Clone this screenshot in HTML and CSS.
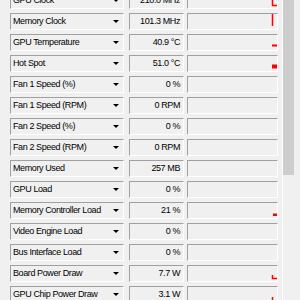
FILE: index.html
```html
<!DOCTYPE html>
<html lang="en">
<head>
    <meta charset="UTF-8">
    <title>Sensors</title>
    <link rel="stylesheet" href="styles.css">
</head>
<body>
    <div class="window">
        <div class="sensors">
            <div class="row">
                <div class="box label">GPU Clock<span class="arrow"></span></div>
                <div class="box value">210.0 MHz</div>
                <div class="box graph"><svg viewBox="0 0 89 15"><path d="M84.5 3V12.5H89"/></svg></div>
            </div>
            <div class="row">
                <div class="box label">Memory Clock<span class="arrow"></span></div>
                <div class="box value">101.3 MHz</div>
                <div class="box graph"><svg viewBox="0 0 89 15"><path d="M84.5 0V12"/></svg></div>
            </div>
            <div class="row">
                <div class="box label">GPU Temperature<span class="arrow"></span></div>
                <div class="box value">40.9 °C</div>
                <div class="box graph"><svg viewBox="0 0 89 15"><rect x="84" y="9.5" width="5" height="2"/></svg></div>
            </div>
            <div class="row">
                <div class="box label">Hot Spot<span class="arrow"></span></div>
                <div class="box value">51.0 °C</div>
                <div class="box graph"><svg viewBox="0 0 89 15"><rect x="84" y="8.5" width="5" height="4"/></svg></div>
            </div>
            <div class="row">
                <div class="box label">Fan 1 Speed (%)<span class="arrow"></span></div>
                <div class="box value">0 %</div>
                <div class="box graph"></div>
            </div>
            <div class="row">
                <div class="box label">Fan 1 Speed (RPM)<span class="arrow"></span></div>
                <div class="box value">0 RPM</div>
                <div class="box graph"></div>
            </div>
            <div class="row">
                <div class="box label">Fan 2 Speed (%)<span class="arrow"></span></div>
                <div class="box value">0 %</div>
                <div class="box graph"></div>
            </div>
            <div class="row">
                <div class="box label">Fan 2 Speed (RPM)<span class="arrow"></span></div>
                <div class="box value">0 RPM</div>
                <div class="box graph"></div>
            </div>
            <div class="row">
                <div class="box label">Memory Used<span class="arrow"></span></div>
                <div class="box value">257 MB</div>
                <div class="box graph"></div>
            </div>
            <div class="row">
                <div class="box label">GPU Load<span class="arrow"></span></div>
                <div class="box value">0 %</div>
                <div class="box graph"></div>
            </div>
            <div class="row">
                <div class="box label">Memory Controller Load<span class="arrow"></span></div>
                <div class="box value">21 %</div>
                <div class="box graph"><svg viewBox="0 0 89 15"><rect x="85" y="10.5" width="4" height="2.5"/></svg></div>
            </div>
            <div class="row">
                <div class="box label">Video Engine Load<span class="arrow"></span></div>
                <div class="box value">0 %</div>
                <div class="box graph"></div>
            </div>
            <div class="row">
                <div class="box label">Bus Interface Load<span class="arrow"></span></div>
                <div class="box value">0 %</div>
                <div class="box graph"></div>
            </div>
            <div class="row">
                <div class="box label">Board Power Draw<span class="arrow"></span></div>
                <div class="box value">7.7 W</div>
                <div class="box graph"><svg viewBox="0 0 89 15"><path d="M84.5 9V12.5H89"/></svg></div>
            </div>
            <div class="row">
                <div class="box label">GPU Chip Power Draw<span class="arrow"></span></div>
                <div class="box value">3.1 W</div>
                <div class="box graph"><svg viewBox="0 0 89 15"><path d="M84.5 10V15"/></svg></div>
            </div>
        </div>
        <div class="scrollbar">
            <div class="thumb"></div>
        </div>
    </div>
</body>
</html>
```

FILE: styles.css
```css
* {
    box-sizing: border-box;
    margin: 0;
    padding: 0;
}

body {
    background: #f0f0f0;
    font-family: "Liberation Sans", Arial, sans-serif;
    font-size: 9px;
    letter-spacing: -0.4px;
    color: #000;
    overflow: hidden;
}

.window {
    display: flex;
    gap: 4px;
    height: 300px;
    padding-left: 10px;
}

.sensors {
    width: 268px;
    margin-top: -8px;
    display: flex;
    flex-direction: column;
    gap: 4px;
}

.row {
    display: flex;
    height: 17px;
    flex: none;
}

.box {
    border: 1px solid;
    border-color: #a0a0a0 #fff #fff #a0a0a0;
    line-height: 15px;
    white-space: nowrap;
}

.label {
    width: 114px;
    display: flex;
    align-items: center;
    justify-content: space-between;
    padding: 0 4px 0 2px;
}

.arrow {
    width: 0;
    height: 0;
    border-left: 3px solid transparent;
    border-right: 3px solid transparent;
    border-top: 3px solid #000;
}

.value {
    width: 55px;
    margin-left: 5px;
    text-align: right;
    padding-right: 3px;
}

.graph {
    width: 91px;
    margin-left: 3px;
}

.graph svg {
    display: block;
    width: 89px;
    height: 15px;
    overflow: visible;
}

.graph path {
    fill: none;
    stroke: #f00;
    stroke-width: 1.5;
}

.graph rect {
    fill: #f00;
}

.scrollbar {
    width: 13px;
    height: 300px;
    background: #f0f0f0;
    border-left: 1px solid #fff;
}

.thumb {
    width: 11px;
    height: 175px;
    background: #cdcdcd;
}
```
